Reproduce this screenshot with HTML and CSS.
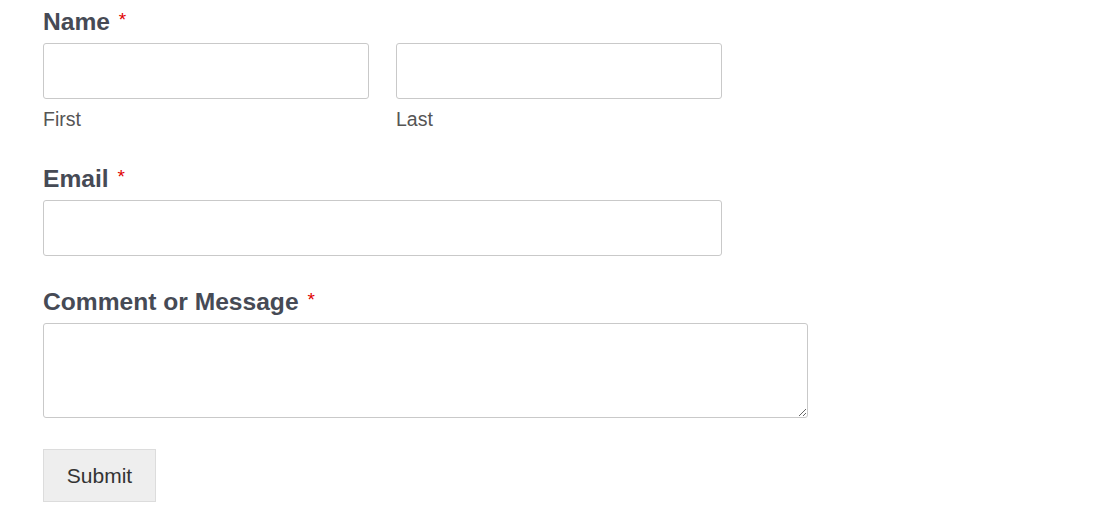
FILE: index.html
```html
<!DOCTYPE html>
<html lang="en">
<head>
<meta charset="utf-8">
<title>Contact form</title>
<link rel="stylesheet" href="styles.css">
</head>
<body>
<form class="form">
  <div class="field">
    <label class="label">Name <span class="req">*</span></label>
    <div class="row">
      <div class="col">
        <input class="input input-half" type="text">
        <span class="sublabel">First</span>
      </div>
      <div class="col">
        <input class="input input-half" type="text">
        <span class="sublabel">Last</span>
      </div>
    </div>
  </div>
  <div class="field">
    <label class="label">Email <span class="req">*</span></label>
    <input class="input input-wide" type="email">
  </div>
  <div class="field">
    <label class="label">Comment or Message <span class="req">*</span></label>
    <textarea class="textarea"></textarea>
  </div>
  <button class="submit" type="button">Submit</button>
</form>
</body>
</html>
```
FILE: styles.css
```css
* { box-sizing: border-box; }
html, body { margin: 0; padding: 0; background: #fff; }
body { font-family: "Liberation Sans", Arial, sans-serif; }
.form {
  padding: 7px 0 0 43px;
  display: flex;
  flex-direction: column;
  align-items: flex-start;
}
.field {
  display: flex;
  flex-direction: column;
  margin-bottom: 31px;
}
.label {
  display: block;
  font-size: 24.6px;
  line-height: 30px;
  height: 30px;
  font-weight: 700;
  color: #464a55;
  margin-bottom: 6px;
}
.req {
  color: #e10000;
  font-size: 19px;
  font-weight: 400;
  line-height: 0;
  vertical-align: 4px;
  margin-left: 2px;
}
.row { display: flex; gap: 27px; }
.col { display: flex; flex-direction: column; }
.input, .textarea {
  display: block;
  border: 1px solid #c9c9c9;
  border-radius: 3px;
  background: #fff;
  margin: 0;
  padding: 6px 10px;
  font: inherit;
}
.input-half { width: 326px; height: 56px; }
.input-wide { width: 679px; height: 56px; }
.sublabel {
  font-size: 19.5px;
  line-height: 24px;
  color: #555;
  margin-top: 8px;
  margin-bottom: 2px;
}
.textarea { width: 765px; height: 95px; resize: both; }
.submit {
  width: 113px;
  height: 53px;
  background: #eee;
  border: 1px solid #dcdcdc;
  border-radius: 0;
  font-family: "Liberation Sans", Arial, sans-serif;
  font-size: 21px;
  color: #333;
  padding: 0;
  margin: 0;
}
```
